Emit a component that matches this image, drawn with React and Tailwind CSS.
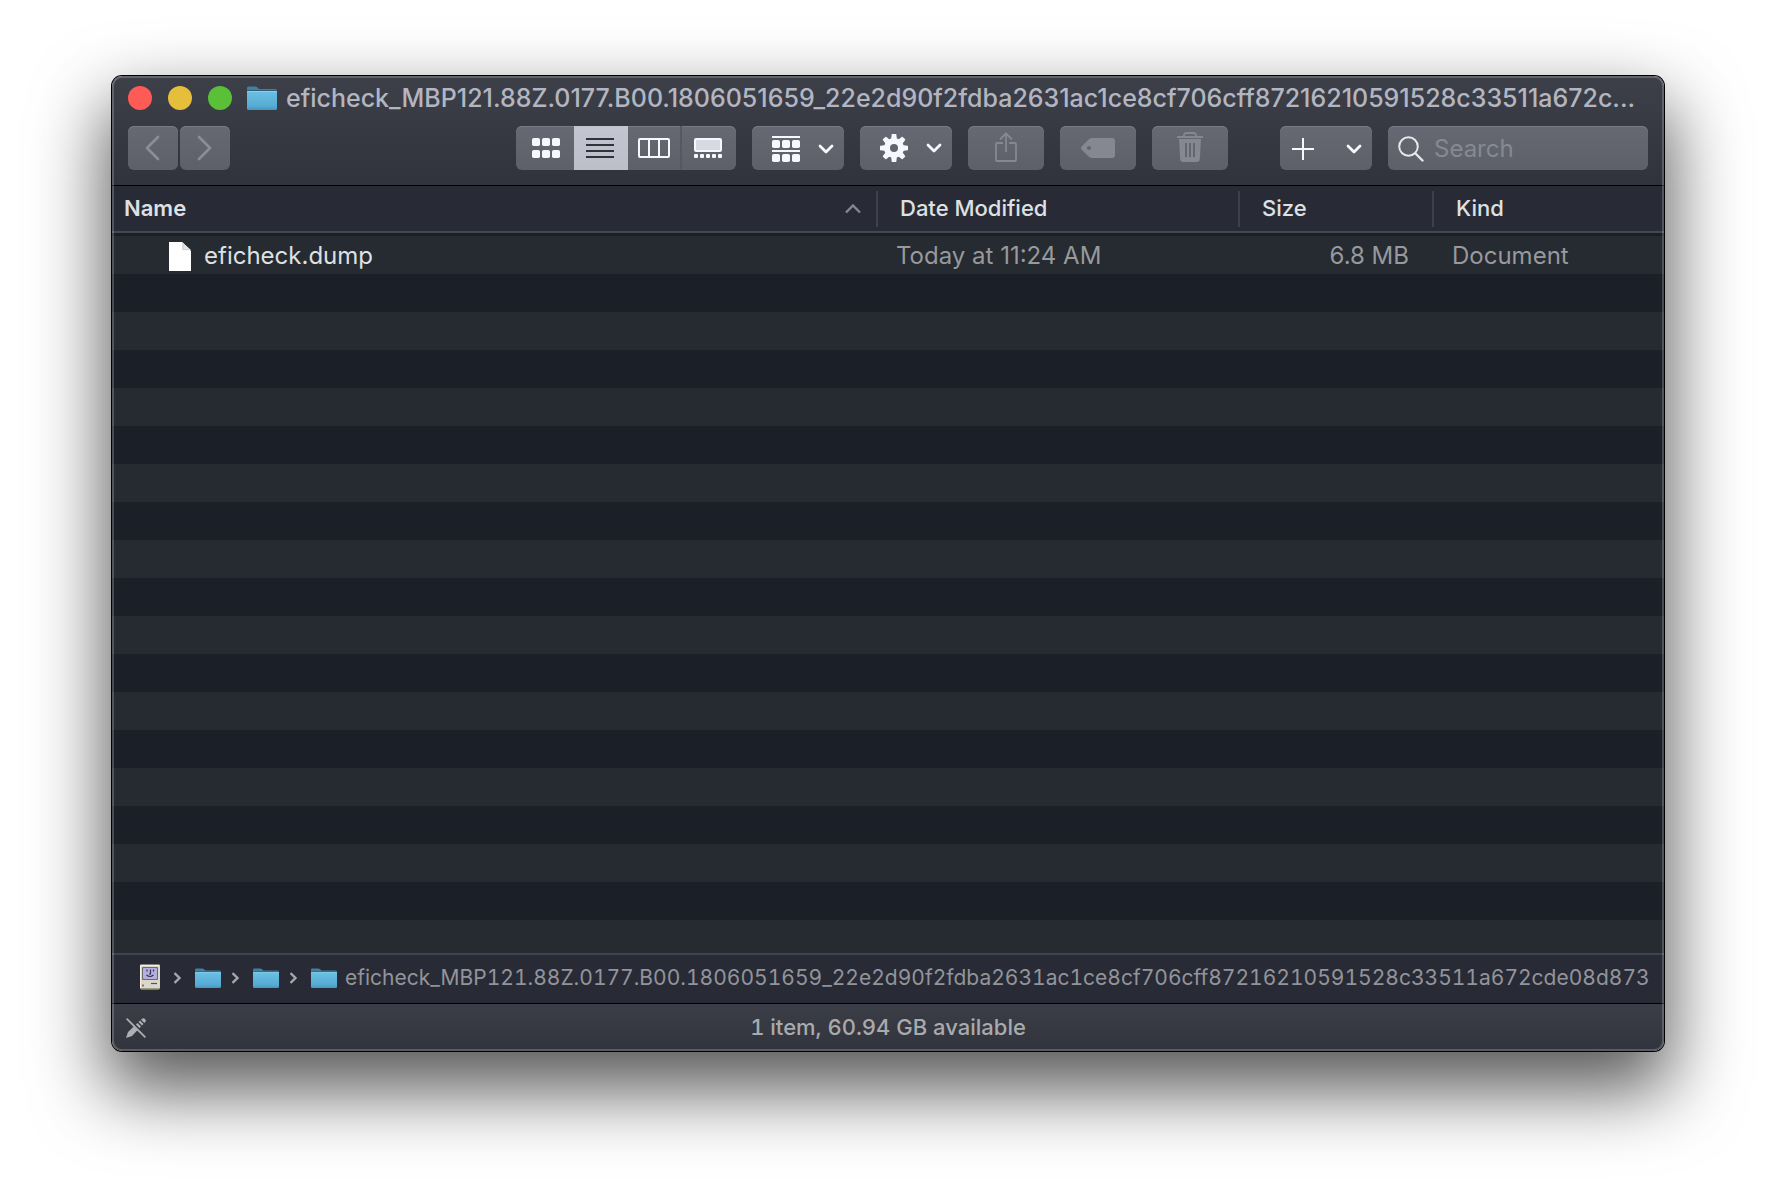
import React from 'react';

const FOLDER_NAME = 'eficheck_MBP121.88Z.0177.B00.1806051659_22e2d90f2fdba2631ac1ce8cf706cff87216210591528c33511a672cde08d873';
const WINDOW_TITLE = `${FOLDER_NAME.slice(0, -8)}...`;

const files = [
    { name: 'eficheck.dump', modified: 'Today at 11:24 AM', size: '6.8 MB', kind: 'Document' },
];

const EMPTY_ROWS = 18;

const FolderIcon = ({ className }) => (
    <svg viewBox="0 0 30 24" preserveAspectRatio="none" className={className} aria-hidden="true">
        <defs>
            <linearGradient id="folder-front" x1="0" y1="0" x2="0" y2="1">
                <stop offset="0" stopColor="#6cc0e4" />
                <stop offset="0.8" stopColor="#55abd3" />
                <stop offset="1" stopColor="#4795bb" />
            </linearGradient>
        </defs>
        <path d="M0 2Q0 .5 1.5 .5H8Q9.500 .5 10.500 1.500L12 3H28.500Q30 3 30 4.500V8H0Z" fill="#42809f" />
        <path d="M0 5H30V22.500Q30 24 28.500 24H1.500Q0 24 0 22.500Z" fill="url(#folder-front)" />
        <path d="M0 4.500H30" stroke="#2f5d77" strokeWidth="1" />
        <path d="M0 5.500H30" stroke="#86d2f0" strokeWidth="1" />
    </svg>
);

const FileIcon = () => (
    <svg viewBox="0 0 22 29" className="w-[22px] h-[29px]" aria-hidden="true">
        <path d="M0 0H13L22 9V29H0Z" fill="#ffffff" />
        <path d="M13 0V8H22Z" fill="#e4e4e4" />
        <path d="M14 2V7.500H20" fill="none" stroke="#c9c9c9" strokeWidth="0.7" />
    </svg>
);

const MacIcon = () => (
    <svg viewBox="0 0 23 28" className="w-[23px] h-7 shrink-0" aria-hidden="true">
        <rect x="1" y="23" width="18" height="4" fill="#77786c" />
        <path d="M1 26.500H19" stroke="#2b2d2a" />
        <rect x="0" y="0.500" width="20" height="24" rx="1" fill="#d9d8cb" />
        <path d="M0.500 24V1.500H19" fill="none" stroke="#f2f1e8" />
        <rect x="2" y="3" width="16" height="13" rx="1" fill="#6b6a70" />
        <rect x="3" y="4" width="14" height="11" rx="1" fill="#b3b0e0" />
        <path d="M7 5.500V7.500M13.500 5.500V7.500M10.500 5.500V10H9M6.500 11Q10 14 13.500 11" fill="none" stroke="#34324f" strokeWidth="1.200" />
        <path d="M11 19.500H17" stroke="#55554d" strokeWidth="1.200" />
        <rect x="2" y="20.500" width="2" height="2" fill="#c0603c" />
        <path d="M0 24.500H20" stroke="#9c9c8e" />
    </svg>
);

const ChevronDown = () => (
    <svg viewBox="0 0 16 10" className="w-4 h-2.5" fill="none" stroke="#f6f8ff" strokeWidth="2.800" strokeLinecap="round" strokeLinejoin="round" aria-hidden="true">
        <path d="M2 2L8 8L14 2" />
    </svg>
);

const PathChevron = () => (
    <svg viewBox="1 0 8 14" className="w-2 h-3.5 ml-[11px] mr-[13px] shrink-0" fill="none" stroke="#a6a7ab" strokeWidth="2.400" aria-hidden="true">
        <path d="M1.500 2L6.500 7L1.500 12" />
    </svg>
);

const NavIcon = ({ d }) => (
    <svg viewBox="0 0 16 26" className="w-4 h-6.5" fill="none" stroke="#8c8e97" strokeWidth="2.600" strokeLinecap="round" strokeLinejoin="round" aria-hidden="true">
        <path d={d} />
    </svg>
);

const squares = (y) => [0, 10, 20].map(x => (
    <rect key={`${x}-${y}`} x={x} y={y} width="8" height="8" rx="1.800" />
));

const GridIcon = () => (
    <svg viewBox="0 0 28 20" className="w-7 h-5" fill="#f6f8ff" aria-hidden="true">
        {squares(0)}
        {squares(12)}
    </svg>
);

const ListIcon = () => (
    <svg viewBox="0 0 28 20" className="w-7 h-5" stroke="#30323c" strokeWidth="2" aria-hidden="true">
        <path d="M0 1H28M0 7H28M0 13H28M0 19H28" />
    </svg>
);

const ColumnsIcon = () => (
    <svg viewBox="0 0 32 20" className="w-8 h-5" fill="none" stroke="#f6f8ff" strokeWidth="2" aria-hidden="true">
        <rect x="1" y="1" width="30" height="18" rx="1" />
        <path d="M11 1V19M21 1V19" />
    </svg>
);

const GalleryIcon = () => (
    <svg viewBox="0 0 28 20" className="w-7 h-5" fill="#f6f8ff" aria-hidden="true">
        <rect x="1" y="1" width="26" height="12" rx="1" fill="#d8dae3" stroke="#f6f8ff" strokeWidth="2" />
        {[0, 6, 12, 18, 24].map(x => (
            <rect key={x} x={x} y="16" width="4" height="4" rx="1" />
        ))}
    </svg>
);

const GroupIcon = () => (
    <svg viewBox="0 0 28 26" className="w-7 h-6.5" fill="#f6f8ff" aria-hidden="true">
        <rect x="0" y="0" width="28" height="2" />
        {squares(4)}
        <rect x="0" y="14" width="28" height="2" />
        {squares(18)}
    </svg>
);

const GearIcon = () => (
    <svg viewBox="0 0 28 28" className="w-7 h-7" aria-hidden="true">
        <circle cx="14" cy="14" r="7" fill="none" stroke="#f6f8ff" strokeWidth="6" />
        {[0, 45, 90, 135, 180, 225, 270, 315].map(angle => (
            <path key={angle} d="M11 6L11.700 0.500Q11.800 0 12.300 0H15.700Q16.200 0 16.300 0.500L17 6Z" fill="#f6f8ff" transform={`rotate(${angle} 14 14)`} />
        ))}
    </svg>
);

const ShareIcon = () => (
    <svg viewBox="0 0 22 30" className="w-[22px] h-[30px]" fill="none" stroke="#868891" strokeWidth="1.800" aria-hidden="true">
        <path d="M8 11H2Q1 11 1 12V28Q1 29 2 29H20Q21 29 21 28V12Q21 11 20 11H14" />
        <path d="M11 20V1.500M5 7.500L11 1.300L17 7.500" />
    </svg>
);

const TagIcon = () => (
    <svg viewBox="0 0 34 20" className="w-[34px] h-5" aria-hidden="true">
        <path fillRule="evenodd" fill="#868891" d="M11 0H31Q34 0 34 3V17Q34 20 31 20H11Q9.500 20 8 18.700L1 12Q-1 10 1 8L8 1.300Q9.500 0 11 0ZM8 8A2 2 0 1 0 8 12A2 2 0 1 0 8 8Z" />
    </svg>
);

const TrashIcon = () => (
    <svg viewBox="0 0 26 30" className="w-[26px] h-[30px]" aria-hidden="true">
        <path d="M0 5H26M6.500 5Q7 1 9.500 1H16.500Q19 1 19.500 5" fill="none" stroke="#868891" strokeWidth="1.800" />
        <path d="M2 7H24L22.800 27Q22.600 30 19.800 30H6.200Q3.400 30 3.200 27Z" fill="#868891" />
        <path d="M9 11V25M13 11V25M17 11V25" stroke="#60636b" strokeWidth="1.800" />
    </svg>
);

const PlusIcon = () => (
    <svg viewBox="0 0 22 22" className="w-[22px] h-[22px]" stroke="#f6f8ff" strokeWidth="2" aria-hidden="true">
        <path d="M11 0V22M0 11H22" />
    </svg>
);

const SearchIcon = () => (
    <svg viewBox="0 0 26 26" className="w-6.5 h-6.5 shrink-0" fill="none" stroke="#e6e7ea" strokeWidth="2" strokeLinecap="round" aria-hidden="true">
        <circle cx="10.500" cy="10.500" r="9.300" />
        <path d="M17.500 17.500L24.500 24.500" strokeWidth="2.400" />
    </svg>
);

const NoEditIcon = () => (
    <svg viewBox="0 0 20 20" className="w-5 h-5" aria-hidden="true">
        <path d="M0 20L2 14L11.500 5L15 8.500L6 18Z" fill="#aeafb2" />
        <path d="M12.500 4L14 2.500L17.500 6L16 7.500Z" fill="#aeafb2" />
        <path d="M15 1.700L16 0.700Q17.500 -0.500 19 1Q20.500 2.500 19.300 4L18.300 5Z" fill="#aeafb2" />
        <path d="M2 0L20 18" stroke="#373a43" strokeWidth="2" />
        <path d="M0.700 0.700L19.300 19.300" stroke="#aeafb2" strokeWidth="1.800" />
    </svg>
);

const ToolbarButton = ({ label, className = '', children }) => (
    <button
        aria-label={label}
        className={`h-11 flex items-center rounded-md bg-linear-to-b from-[#666973] to-[#5d6068] shadow-[inset_0_1px_0_#777a83] ${className}`}
    >
        {children}
    </button>
);

const views = [
    { id: 'icons', label: 'Icon view', icon: GridIcon, style: 'w-[58px] pl-4 rounded-l-md' },
    { id: 'list', label: 'List view', icon: ListIcon, style: 'w-[54px] pl-3' },
    { id: 'columns', label: 'Column view', icon: ColumnsIcon, style: 'w-[54px] pl-2.5 border-r-2 border-[#555861]' },
    { id: 'gallery', label: 'Gallery view', icon: GalleryIcon, style: 'w-[54px] pl-3 rounded-r-md' },
];

const Toolbar = ({ activeView }) => (
    <div className="flex items-center px-4">
        <div className="flex gap-0.5">
            <ToolbarButton label="Back" className="w-[50px] pl-4">
                <NavIcon d="M14 2L3 13L14 24" />
            </ToolbarButton>
            <ToolbarButton label="Forward" className="w-[50px] justify-center">
                <NavIcon d="M2 2L13 13L2 24" />
            </ToolbarButton>
        </div>

        <div className="ml-auto flex gap-4">
            <div className="flex">
                {views.map(({ id, label, icon: Icon, style }) => (
                    <button
                        key={id}
                        aria-label={label}
                        aria-pressed={id === activeView}
                        className={`h-11 flex items-center ${style} ${id === activeView
                                ? 'bg-linear-to-b from-[#c3c6d0] to-[#bcbfc9]'
                                : 'bg-linear-to-b from-[#666973] to-[#5d6068] shadow-[inset_0_1px_0_#777a83]'
                            }`}
                    >
                        <Icon />
                    </button>
                ))}
            </div>
            <ToolbarButton label="Group items" className="w-23 pl-5 pr-2.5 pt-0.5 justify-between">
                <GroupIcon />
                <ChevronDown />
            </ToolbarButton>
            <ToolbarButton label="Actions" className="w-23 pl-5 pr-2.5 justify-between">
                <GearIcon />
                <ChevronDown />
            </ToolbarButton>
            <ToolbarButton label="Share" className="w-19 pb-0.5 justify-center">
                <ShareIcon />
            </ToolbarButton>
            <ToolbarButton label="Edit tags" className="w-19 justify-center">
                <TagIcon />
            </ToolbarButton>
            <ToolbarButton label="Delete" className="w-19 pb-0.5 justify-center">
                <TrashIcon />
            </ToolbarButton>
        </div>

        <div className="ml-13 flex gap-4">
            <ToolbarButton label="Add" className="w-23 pl-3 pr-2.5 pt-0.5 justify-between">
                <PlusIcon />
                <ChevronDown />
            </ToolbarButton>
            <label className="w-65 h-11 flex items-center gap-2.5 pl-2.5 pr-3 pt-0.5 rounded-md bg-linear-to-b from-[#666973] to-[#5d6068] shadow-[inset_0_1px_0_#777a83]">
                <SearchIcon />
                <input
                    type="search"
                    aria-label="Search"
                    placeholder="Search"
                    className="w-full min-w-0 bg-transparent text-2xl text-white placeholder:text-[#868992] outline-none"
                />
            </label>
        </div>
    </div>
);

const TitleBar = () => (
    <div className="flex items-center h-11 pl-4 pr-5">
        <div className="flex gap-4">
            <button aria-label="Close" className="w-6 h-6 rounded-full bg-[#ff5b56]" />
            <button aria-label="Minimize" className="w-6 h-6 rounded-full bg-[#e5be3b]" />
            <button aria-label="Zoom" className="w-6 h-6 rounded-full bg-[#59c038]" />
        </div>
        <FolderIcon className="w-[30px] h-6 ml-[15px] mr-[9px] shrink-0" />
        <h1 className="pt-0.5 whitespace-nowrap text-[25px] font-medium text-[#b3b6c1]">{WINDOW_TITLE}</h1>
    </div>
);

const HeaderCell = ({ children }) => (
    <th scope="col" className="p-0 text-left font-medium">
        <div className="h-9 flex items-center pl-[22px] border-l-2 border-[#3e414b]">{children}</div>
    </th>
);

const FileTable = () => (
    <table className="w-full table-fixed border-collapse">
        <colgroup>
            <col />
            <col className="w-[362px]" />
            <col className="w-[194px]" />
            <col className="w-[232px]" />
        </colgroup>
        <thead className="bg-[#282b36] text-[22px] text-[#dfe0e2]">
            <tr className="h-[46px] border-b-2 border-[#454852]">
                <th scope="col" className="p-0 text-left font-semibold">
                    <div className="flex items-center justify-between pl-3 pr-[15px]">
                        Name
                        <svg viewBox="0 0 16 10" className="w-4 h-2.5" fill="none" stroke="#85878d" strokeWidth="2.400" aria-hidden="true">
                            <path d="M1 8.500L8 1.500L15 8.500" />
                        </svg>
                    </div>
                </th>
                <HeaderCell>Date Modified</HeaderCell>
                <HeaderCell>Size</HeaderCell>
                <HeaderCell>Kind</HeaderCell>
            </tr>
        </thead>
        <tbody className="text-2xl text-[#97999c]">
            <tr className="h-1 bg-[#1b1f27]" aria-hidden="true">
                <td colSpan={4} className="p-0" />
            </tr>
            {files.map(file => (
                <tr key={file.name} className="h-[38px] bg-[#262a31]">
                    <td className="p-0 pt-0.5">
                        <div className="flex items-center gap-[13px] pl-[57px] text-[#dfe0e1]">
                            <FileIcon />
                            {file.name}
                        </div>
                    </td>
                    <td className="p-0 pt-0.5 pl-5">{file.modified}</td>
                    <td className="p-0 pt-0.5 pr-[23px] text-right">{file.size}</td>
                    <td className="p-0 pt-0.5 pl-5">{file.kind}</td>
                </tr>
            ))}
            {Array.from({ length: EMPTY_ROWS }, (_, i) => (
                <tr key={i} className="h-[38px] last:h-[33px] odd:bg-[#1b1f27] even:bg-[#262a31]" aria-hidden="true">
                    <td colSpan={4} className="p-0" />
                </tr>
            ))}
        </tbody>
    </table>
);

const PathBar = () => (
    <nav aria-label="Path" className="h-[50px] flex items-center pl-7 pr-6 pb-0.5 border-t-2 border-[#41444e] bg-[#282b36]">
        <MacIcon />
        <PathChevron />
        <FolderIcon className="w-6.5 h-5 shrink-0" />
        <PathChevron />
        <FolderIcon className="w-6.5 h-5 shrink-0" />
        <PathChevron />
        <FolderIcon className="w-6.5 h-5 shrink-0" />
        <span className="ml-2 whitespace-nowrap text-[21px] tabular-nums text-[#92949a]">{FOLDER_NAME}</span>
    </nav>
);

const StatusBar = () => (
    <footer className="relative h-12 flex items-center justify-center border-t border-black bg-linear-to-b from-[#3b3e47] to-[#31343d] text-[22px] font-medium tabular-nums text-[#a9aaad]">
        <button aria-label="Read only" className="absolute left-3.5">
            <NoEditIcon />
        </button>
        <span>1 item, 60.94 GB available</span>
    </footer>
);

const App = () => (
    <div className="min-h-screen bg-white px-28 pt-19 pb-37 font-['Inter','Liberation_Sans',sans-serif]">
        <div className="relative rounded-[10px] shadow-[0_0_0_1px_#000000,0_34px_72px_6px_rgba(0,0,0,0.65)]">
            <div className="overflow-hidden rounded-[10px]">
                <header className="h-[110px] border-b border-black bg-linear-to-b from-[#3d4049] to-[#30333c]">
                    <TitleBar />
                    <div className="pt-1.5">
                        <Toolbar activeView="list" />
                    </div>
                </header>
                <FileTable />
                <PathBar />
                <StatusBar />
            </div>
            <div className="pointer-events-none absolute inset-0 rounded-[10px] border-2 border-white/20" />
        </div>
    </div>
);

export default App;
